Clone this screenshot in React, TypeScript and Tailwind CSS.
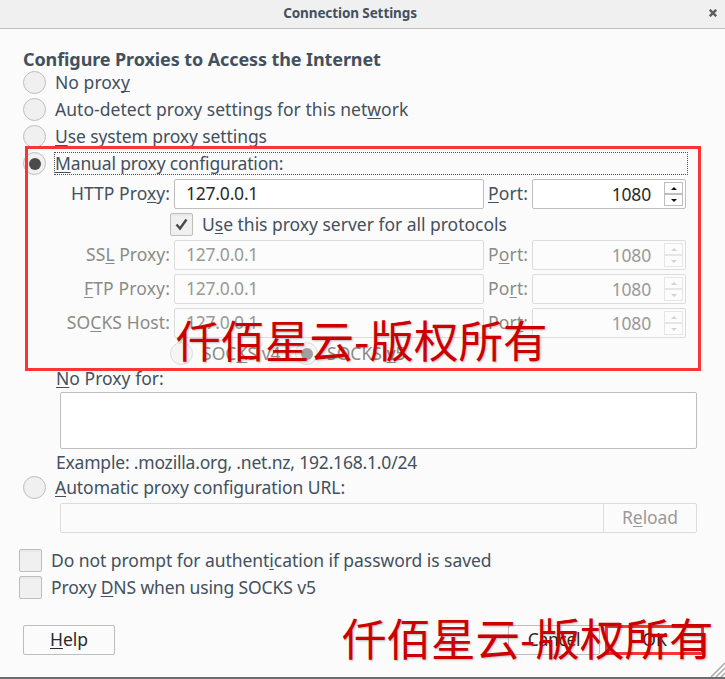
import React from "react";

const family = "font-['Noto_Sans','Noto_Sans_CJK_SC',sans-serif]";

/** Label text in which the part between underscores is the keyboard mnemonic. */
function Text({ children, className = "" }: { children: string; className?: string }) {
  const parts = children.split("_");
  return (
    <span className={`whitespace-pre pb-[2px] leading-[24px] ${className}`}>
      {parts.map((p, i) =>
        i === 1 ? (
          <span key={i} className="underline decoration-1 underline-offset-2 [text-decoration-skip-ink:none]">
            {p}
          </span>
        ) : (
          p
        ),
      )}
    </span>
  );
}

function Radio({ checked = false, disabled = false }: { checked?: boolean; disabled?: boolean }) {
  return (
    <span
      className={`flex size-[23px] shrink-0 items-center justify-center rounded-full border border-[#bebebe] bg-[#f0f0f0] ${disabled ? "opacity-50" : ""}`}
    >
      {checked && <span className="size-3 rounded-full bg-[#4a4a4a]" />}
    </span>
  );
}

function Check({ checked = false }: { checked?: boolean }) {
  return (
    <span className="flex size-[23px] shrink-0 items-center justify-center rounded-[2px] border border-[#bebebe] bg-[#f0f0f0] shadow-[inset_0_2px_1px_#e8e8e8]">
      {checked && (
        <svg width="13" height="13" viewBox="0 0 13 13" fill="none" stroke="#4a4a4a" strokeWidth="2.4">
          <path d="M1.5 6.5 5 10.5 11.5 1.5" />
        </svg>
      )}
    </span>
  );
}

function Spinner({ disabled }: { disabled: boolean }) {
  const fill = disabled ? "#888" : "#111";
  return (
    <span className={`flex w-[19px] flex-col ${disabled ? "opacity-35" : ""}`}>
      <span className="flex h-[12px] items-center justify-center border border-[#bebebe]">
        <svg width="6" height="3" viewBox="0 0 6 3"><path d="M0 3 3 0 6 3Z" fill={fill} /></svg>
      </span>
      <span className="flex h-[12px] items-center justify-center border border-[#bebebe]">
        <svg width="6" height="3" viewBox="0 0 6 3"><path d="M0 0 3 3 6 0Z" fill={fill} /></svg>
      </span>
    </span>
  );
}

function ProxyRow({ label, labelTracking, port, disabled = false }: { label: string; labelTracking: string; port: string; disabled?: boolean }) {
  const box = disabled ? "border-[#dcdcdc] bg-[#fcfcfc] text-[#999]" : "border-[#bebebe] bg-white text-[#2b2b2b]";
  return (
    <div className={`flex h-[30px] items-center ${disabled ? "text-[#8b8b85]" : ""}`}>
      <span className="flex w-[170px] justify-end">
        <Text className={labelTracking}>{label}</Text>
      </span>
      <span className={`ml-1 flex h-[30px] w-[310px] items-center rounded-[2px] border pl-[11px] ${box}`}>
        <Text className="tracking-[-0.22px]">127.0.0.1</Text>
      </span>
      <span className="ml-1 flex w-11">
        <Text className="tracking-[0.15px]">{port}</Text>
      </span>
      <span className={`flex h-[30px] w-[154px] items-center justify-end rounded-[2px] border pr-[2px] ${box}`}>
        <Text className="mr-[13px] pt-[2px] tracking-[-0.2px]">1080</Text>
        <Spinner disabled={disabled} />
      </span>
    </div>
  );
}

function Watermark({ className }: { className: string }) {
  return (
    <div
      className={`pointer-events-none absolute whitespace-nowrap font-['Noto_Sans_CJK_SC',sans-serif] text-[44.5px] leading-[44px] text-[#cc0000] [text-shadow:1px_1px_2px_rgba(0,0,0,0.25)] ${className}`}
    >
      仟佰星云-版权所有
    </div>
  );
}

export default function App() {
  return (
    <div className={`relative flex h-[679px] w-[725px] flex-col overflow-hidden border-b-2 border-[#6b6e70] bg-[#fbfbfb] text-[17.5px] text-[#43505e] ${family}`}>
      <header className="flex h-[29px] shrink-0 items-center border-b border-[#bebebe] bg-[#f0f0f0]">
        <span className="w-[700px] pb-[3px] text-center text-[13.5px] font-bold leading-5 tracking-[-0.1px]">Connection Settings</span>
        <svg className="ml-[9px] mb-[3px]" width="8" height="8" viewBox="0 0 8 8" stroke="#5e5e5e" strokeWidth="2.4">
          <path d="M.8.8 7.2 7.2M7.2.8.8 7.2" />
        </svg>
      </header>

      <h1 className="mt-[18px] mb-px ml-[23px] h-[21px] whitespace-nowrap text-[18px] font-bold leading-[24px] tracking-[-0.1px]">
        Configure Proxies to Access the Internet
      </h1>

      <div className="ml-[23px] flex h-[27px] items-center gap-[9px]"><Radio /><Text className="tracking-[0.05px]">No prox_y</Text></div>
      <div className="ml-[23px] flex h-[27px] items-center gap-[9px]"><Radio /><Text className="tracking-[0.03px]">Auto-detect proxy settings for this net_w_ork</Text></div>
      <div className="ml-[23px] flex h-[27px] items-center gap-[9px]"><Radio /><Text className="tracking-[-0.1px]">_U_se system proxy settings</Text></div>
      <div className="ml-[23px] flex h-[27px] items-center gap-2">
        <Radio checked />
        <span className="flex h-[23px] w-[634px] items-center border border-dotted border-[#43505e]">
          <Text className="tracking-[-0.15px]">_M_anual proxy configuration:</Text>
        </span>
      </div>

      <div className="mt-[2px] flex flex-col">
        <ProxyRow label="HTTP Pro_x_y:" labelTracking="tracking-[0.05px]" port="_P_ort:" />
        <div className="mt-1 ml-[170px] flex h-[23px] items-center gap-[9px]">
          <Check checked />
          <Text className="tracking-[-0.02px]">U_s_e this proxy server for all protocols</Text>
        </div>
        <div className="mt-1 flex flex-col gap-1">
          <ProxyRow label="SS_L_ Proxy:" labelTracking="tracking-[0.04px]" port="P_o_rt:" disabled />
          <ProxyRow label="_F_TP Proxy:" labelTracking="tracking-[0.15px]" port="Po_r_t:" disabled />
          <ProxyRow label="SO_C_KS Host:" labelTracking="tracking-[0.08px]" port="Por_t_:" disabled />
        </div>
        <div className="mt-1 ml-[170px] flex h-[23px] items-center text-[#8b8b85]">
          <span className="flex w-[125px] items-center gap-[9px]"><Radio disabled /><Text className="tracking-[0.05px]">SOC_K_S v4</Text></span>
          <span className="flex items-center gap-[9px]"><Radio checked disabled /><Text className="tracking-[0.05px]">SOCKS _v_5</Text></span>
        </div>
      </div>

      <div className="mt-[1px] mb-px ml-[56px] flex h-[25px] items-center"><Text className="tracking-[0.03px]">_N_o Proxy for:</Text></div>
      <div className="ml-[60px] h-[57px] w-[637px] shrink-0 rounded-[2px] border border-[#bebebe] bg-white" />
      <div className="mt-[1px] ml-[56px] flex h-[26px] items-center"><Text className="tracking-[-0.2px]">Example: .mozilla.org, .net.nz, 192.168.1.0/24</Text></div>
      <div className="ml-[23px] flex h-[23px] items-center gap-[9px]"><Radio /><Text className="tracking-[-0.07px]">_A_utomatic proxy configuration URL:</Text></div>
      <div className="mt-1 ml-[60px] flex h-[30px] w-[637px] rounded-[2px] border border-[#dcdcdc] text-[#999]">
        <span className="w-[543px] border-r border-[#dcdcdc]" />
        <span className="flex flex-1 items-center justify-center"><Text className="tracking-[-0.1px]">R_e_load</Text></span>
      </div>

      <div className="mt-[14px] ml-[19px] flex h-[27px] items-center gap-[9px]"><Check /><Text className="tracking-[-0.05px]">Do not prompt for authent_i_cation if password is saved</Text></div>
      <div className="ml-[19px] flex h-[27px] items-center gap-[9px]"><Check /><Text className="tracking-[-0.13px]">Proxy _D_NS when using SOCKS v5</Text></div>

      <div className="mt-6 ml-[23px] flex h-[30px] text-[#2b2b2b]">
        <button className="flex w-[92px] items-center justify-center rounded-[2px] border border-[#bebebe]"><Text>_H_elp</Text></button>
        <button className="ml-[393px] flex w-[92px] items-center justify-center rounded-[2px] border border-[#bebebe]"><Text className="tracking-[-0.3px]">Cancel</Text></button>
        <button className="ml-[5px] flex w-[99px] items-center justify-center border-3 border-[#fb3535]"><Text>OK</Text></button>
      </div>

      <div className="absolute top-[146px] left-[25px] h-[225px] w-[676px] border-3 border-[#fb3535]" />
      <svg className="absolute right-0 bottom-0" width="15" height="15" viewBox="0 0 15 15" stroke="#aaa" strokeWidth="1.5">
        <path d="M1 15 15 1M6 15 15 6M11 15 15 11" />
      </svg>
      <Watermark className="top-[317px] left-[176px]" />
      <Watermark className="top-[615px] left-[342px]" />
    </div>
  );
}
